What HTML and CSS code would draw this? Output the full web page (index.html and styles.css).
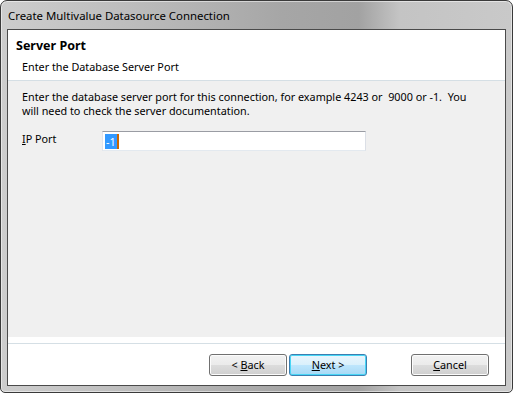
FILE: index.html
```html
<!DOCTYPE html>
<html lang="en">
<head>
    <meta charset="UTF-8">
    <title>Create Multivalue Datasource Connection</title>
    <link rel="stylesheet" href="styles.css">
</head>
<body>

    <!-- Dialog Window -->
    <div class="window">
        <div class="titlebar">Create Multivalue Datasource Connection</div>

        <div class="client">
            <!-- Wizard Header -->
            <div class="header">
                <h1>Server Port</h1>
                <p>Enter the Database Server Port</p>
            </div>

            <!-- Wizard Page -->
            <div class="page">
                <p class="intro">Enter the database server port for this connection, for example 4243 or &nbsp;9000 or -1. &nbsp;You<br>will need to check the server documentation.</p>
                <div class="field">
                    <label><u>I</u>P Port</label>
                    <div class="textbox"><span class="selected">-1</span><span class="caret"></span></div>
                </div>
            </div>

            <!-- Buttons -->
            <div class="footer">
                <button class="button">&lt; <u>B</u>ack</button>
                <button class="button default"><u>N</u>ext &gt;</button>
                <button class="button cancel"><u>C</u>ancel</button>
            </div>
        </div>
    </div>

</body>
</html>
```

FILE: styles.css
```css
* {
    margin: 0;
    padding: 0;
    box-sizing: border-box;
}

body {
    font-family: 'Noto Sans', sans-serif;
    font-size: 10.8px;
    color: #000;
    background: #fff;
    width: 513px;
    height: 393px;
    overflow: hidden;
}

.window {
    width: 513px;
    height: 393px;
    display: flex;
    flex-direction: column;
    border: 1px solid #3a3a3a;
    border-radius: 7px 7px 5px 5px;
    padding: 0 6px 6px 6px;
    background: linear-gradient(to right, #cdcdcd 0%, #bdbdbd 25%, #a6a6a6 55%, #a2a2a2 70%, #c4c4c4 78%, #c9c9c9 100%);
    box-shadow: inset 0 0 0 1px rgba(255, 255, 255, 0.5);
}

.titlebar {
    height: 28px;
    line-height: 29px;
    padding-left: 1px;
    font-size: 11.4px;
    color: #000;
    white-space: nowrap;
}

.client {
    flex: 1;
    display: flex;
    flex-direction: column;
    background-color: #fff;
    border: 1px solid #4a4a4a;
}

.header {
    height: 51px;
    border-bottom: 1px solid #d5dfe5;
    padding: 7px 0 0 8px;
}

.header h1 {
    font-size: 12.5px;
    font-weight: bold;
    line-height: 18px;
}

.header p {
    margin-top: 4px;
    padding-left: 6px;
    line-height: 16px;
}

.page {
    flex: 1;
    background-color: #f0f0f0;
    margin-bottom: 6px;
    padding: 9px 4px 0 14px;
}

.intro {
    line-height: 14px;
    white-space: nowrap;
}

.field {
    display: flex;
    align-items: center;
    margin-top: 13px;
}

.field label {
    width: 80px;
    position: relative;
    top: -3px;
}

.textbox {
    width: 264px;
    height: 20px;
    background-color: #fff;
    border: 1px solid #abadb3;
    border-top-color: #9a9ca3;
    border-left-color: #e2e3ea;
    border-right-color: #dbdfe6;
    border-bottom-color: #e3e9ef;
    display: flex;
    align-items: center;
    padding-left: 2px;
}

.selected {
    background-color: #3399ff;
    color: #fff;
    line-height: 15px;
    padding: 0 1px;
}

.caret {
    width: 2px;
    height: 15px;
    background-color: #cc6600;
}

.footer {
    height: 42px;
    border-top: 1px solid #d5dfe5;
    display: flex;
    align-items: center;
    padding: 0 16px 0 201px;
    gap: 2px;
}

.button {
    width: 78px;
    height: 22px;
    font-family: 'Noto Sans', sans-serif;
    font-size: 10.8px;
    color: #000;
    border: 1px solid #707070;
    border-radius: 3px;
    background: linear-gradient(to bottom, #f2f2f2 0%, #ebebeb 50%, #dddddd 50%, #cfcfcf 100%);
    box-shadow: inset 0 0 0 1px #fcfcfc;
}

.button.default {
    border-color: #3c7fb1;
    background: linear-gradient(to bottom, #eaf6fd 0%, #d9f0fc 50%, #bee6fd 50%, #a7d9f5 100%);
    box-shadow: inset 0 0 0 1px #48d6f6;
}

.button.cancel {
    margin-left: auto;
}
```
